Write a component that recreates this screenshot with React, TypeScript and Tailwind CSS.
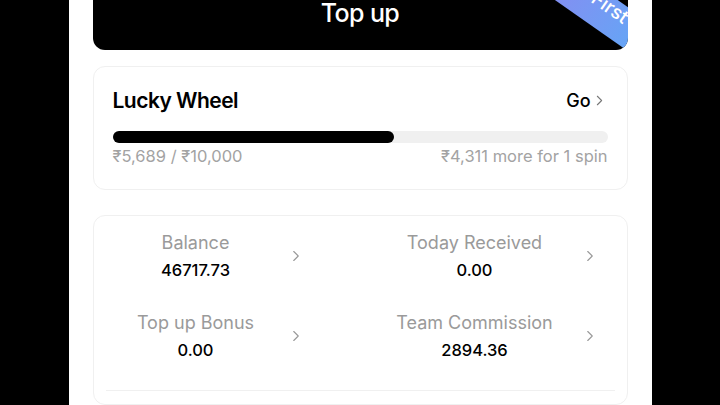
import { ChevronRight } from "lucide-react";

const stats = [
  { label: "Balance", value: "46717.73" },
  { label: "Today Received", value: "0.00" },
  { label: "Top up Bonus", value: "0.00" },
  { label: "Team Commission", value: "2894.36" },
];

export default function App() {
  return (
    <div
      className="w-[720px] h-[405px] bg-black flex justify-center overflow-hidden"
      style={{ fontFamily: "Inter, 'Noto Sans', sans-serif" }}
    >
      <div className="w-[583px] h-full bg-white px-[24px] flex flex-col">
        {/* Top up button */}
        <div className="relative h-[60px] -mt-[10px] pt-[10px] bg-black rounded-b-[12px] overflow-hidden flex items-center justify-center">
          <span className="text-white text-[25px] font-medium tracking-tight leading-none -mt-[24px]">
            Top up
          </span>
          <div className="absolute -right-[34px] top-[-4px] w-[140px] h-[36px] bg-gradient-to-r from-[#8a86f0] to-[#5ea8f6] rotate-[35deg] flex items-center justify-center">
            <span className="text-white text-[19px] font-medium pl-[34px] leading-none -mt-[16px]">First</span>
          </div>
        </div>

        {/* Lucky wheel */}
        <div className="mt-[16px] border border-[#f0f0f0] rounded-[12px] px-[19px] pt-[18px] pb-[22px]">
          <div className="flex items-center justify-between">
            <span className="text-[21px] font-semibold text-black tracking-tight">Lucky Wheel</span>
            <span className="flex items-center text-[18px] font-medium text-black">
              Go
              <ChevronRight className="w-[17px] h-[17px] text-[#777]" strokeWidth={1.5} />
            </span>
          </div>
          <div className="mt-[14px] h-[12px] rounded-full bg-[#f0f0f0]">
            <div className="h-full rounded-full bg-black" style={{ width: "56.9%" }} />
          </div>
          <div className="flex justify-between mt-[2px] text-[16.5px] text-[#a3a3a3] leading-[22px]">
            <span>₹5,689 / ₹10,000</span>
            <span>₹4,311 more for 1 spin</span>
          </div>
        </div>

        {/* Stats */}
        <div className="mt-[25px] border border-[#f0f0f0] rounded-[12px] px-[12px] pt-[16px] flex-1">
          <div className="grid grid-cols-[269px_1fr] gap-y-[31px]">
            {stats.map((s, i) => (
              <div key={s.label} className="flex items-center">
                <div
                  className={
                    i % 2 === 0
                      ? "flex flex-col items-center w-[180px]"
                      : "flex flex-col items-center w-[200px]"
                  }
                >
                  <span className="text-[18px] text-[#9a9a9a] leading-[22px]">{s.label}</span>
                  <span className="text-[16.5px] font-medium text-black leading-[22px] mt-[5px]">{s.value}</span>
                </div>
                <ChevronRight
                  className={
                    i % 2 === 0
                      ? "w-[18px] h-[18px] text-[#999] ml-[1px]"
                      : "w-[18px] h-[18px] text-[#999] ml-[6px]"
                  }
                  strokeWidth={1.5}
                />
              </div>
            ))}
          </div>
          <div className="mt-[29px] border-t border-[#f0f0f0]" />
        </div>
      </div>
    </div>
  );
}
